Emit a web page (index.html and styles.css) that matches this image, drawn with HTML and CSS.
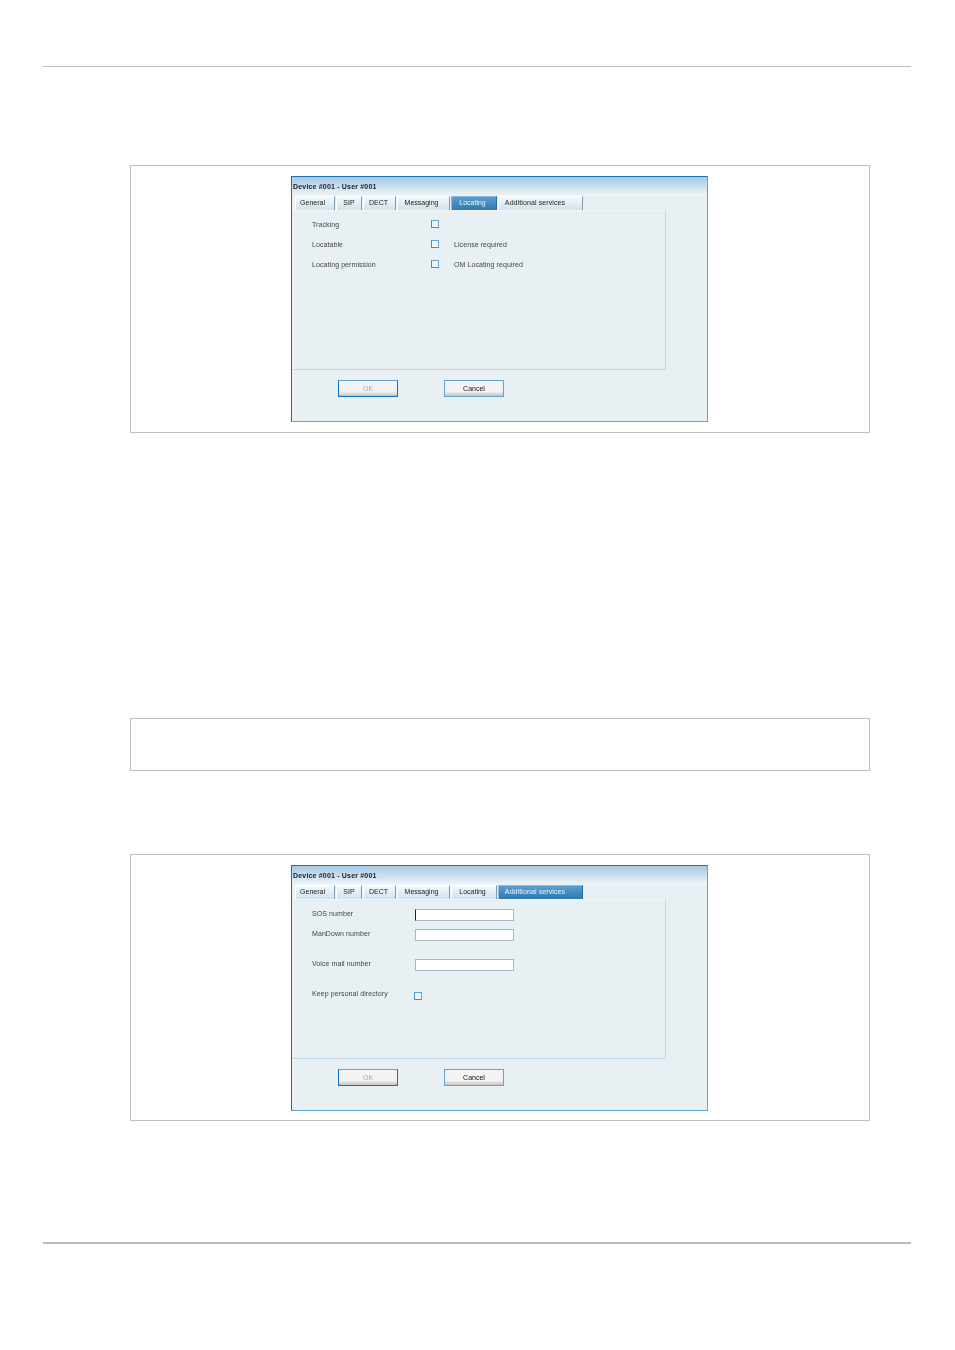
FILE: index.html
```html
<!DOCTYPE html>
<html lang="en">
<head>
    <meta charset="UTF-8">
    <title>Device #001 - User #001</title>
    <link rel="stylesheet" href="styles.css">
</head>
<body>
    <hr class="rule rule-top">

    <div class="figure figure-first">
        <div class="dialog">
            <div class="dialog-title"><span class="txt">Device #001 - User #001</span></div>
            <div class="tabs">
                <span class="tab tab-general"><span class="txt">General</span></span>
                <span class="tab tab-sip"><span class="txt">SIP</span></span>
                <span class="tab tab-dect"><span class="txt">DECT</span></span>
                <span class="tab tab-messaging"><span class="txt">Messaging</span></span>
                <span class="tab tab-locating active"><span class="txt">Locating</span></span>
                <span class="tab tab-additional"><span class="txt">Additional services</span></span>
            </div>
            <div class="panel panel-locating">
                <div class="row">
                    <span class="label txt">Tracking</span>
                    <span class="check"></span>
                </div>
                <div class="row">
                    <span class="label txt">Locatable</span>
                    <span class="check"></span>
                    <span class="note txt">License required</span>
                </div>
                <div class="row">
                    <span class="label txt">Locating permission</span>
                    <span class="check"></span>
                    <span class="note txt">OM Locating required</span>
                </div>
            </div>
            <div class="buttons">
                <button class="btn btn-off"><span class="txt">OK</span></button>
                <button class="btn"><span class="txt">Cancel</span></button>
            </div>
        </div>
    </div>

    <div class="figure figure-empty"></div>

    <div class="figure figure-last">
        <div class="dialog">
            <div class="dialog-title"><span class="txt">Device #001 - User #001</span></div>
            <div class="tabs">
                <span class="tab tab-general"><span class="txt">General</span></span>
                <span class="tab tab-sip"><span class="txt">SIP</span></span>
                <span class="tab tab-dect"><span class="txt">DECT</span></span>
                <span class="tab tab-messaging"><span class="txt">Messaging</span></span>
                <span class="tab tab-locating"><span class="txt">Locating</span></span>
                <span class="tab tab-additional active"><span class="txt">Additional services</span></span>
            </div>
            <div class="panel panel-services">
                <div class="row row-sos">
                    <span class="label txt">SOS number</span>
                    <span class="field field-focus"></span>
                </div>
                <div class="row row-mandown">
                    <span class="label txt">ManDown number</span>
                    <span class="field"></span>
                </div>
                <div class="row row-voice">
                    <span class="label txt">Voice mail number</span>
                    <span class="field"></span>
                </div>
                <div class="row row-keep">
                    <span class="label txt">Keep personal directory</span>
                    <span class="check"></span>
                </div>
            </div>
            <div class="buttons">
                <button class="btn btn-off"><span class="txt">OK</span></button>
                <button class="btn"><span class="txt">Cancel</span></button>
            </div>
        </div>
    </div>

    <hr class="rule rule-bottom">
</body>
</html>
```

FILE: styles.css
```css
body {
    background: #fff;
    margin: 0;
    padding: 0;
    font-family: "Liberation Sans", Arial, sans-serif;
}

.rule {
    border: 0;
    height: 1px;
    background: #c0c0c0;
    margin: 0 44px 0 43px;
}
.rule-top {
    margin-top: 66px;
}
.rule-bottom {
    height: 2px;
    background: #bbb;
    margin-top: 121px;
}

.figure {
    box-sizing: border-box;
    width: 740px;
    margin-left: 130px;
    border: 1px solid #bdbdbd;
    padding: 10px 0 0 160px;
}
.figure-first {
    height: 268px;
    margin-top: 98px;
}
.figure-empty {
    height: 53px;
    margin-top: 285px;
}
.figure-last {
    height: 267px;
    margin-top: 83px;
}

/* the dialogs are scaled-down screenshots, so the text is a bit soft */
.txt {
    display: inline-block;
    filter: blur(0.3px);
}

.dialog {
    box-sizing: border-box;
    width: 417px;
    height: 246px;
    background: #e8f0f4;
    border: 1px solid #5ba5d8;
    border-top-color: #1c74b4;
    border-left-color: #0a72bd;
}

.dialog-title {
    height: 19px;
    padding: 6px 0 0 1px;
    box-sizing: border-box;
    background: linear-gradient(to bottom, #a4c9e6, #f0f5f8);
    font-size: 7px;
    line-height: 8px;
    font-weight: bold;
    color: #222;
    letter-spacing: 0.18px;
}

.tabs {
    display: flex;
    height: 14px;
    padding-left: 3px;
    gap: 1px;
}
.tab {
    box-sizing: border-box;
    height: 14px;
    background: linear-gradient(to bottom, #f4f8fa, #cfe2ee);
    border-top: 1px solid #fff;
    border-left: 1px solid #fff;
    border-right: 1px solid #7f9bb0;
    font-size: 7px;
    line-height: 12px;
    color: #222;
    text-align: center;
}
.tab-general { width: 40px; padding-right: 5px; }
.tab-sip { width: 26px; }
.tab-dect { width: 33px; padding-right: 2px; }
.tab-messaging { width: 53px; padding-right: 4px; }
.tab-locating { width: 46px; padding-right: 3px; }
.tab-additional { width: 85px; padding-right: 11px; letter-spacing: 0.1px; }
.tab.active {
    background: linear-gradient(to bottom, #5a9fd0, #2f78ae);
    border-top-color: #8fbbdc;
    border-left-color: #8fbbdc;
    border-right-color: #1d6fa8;
    color: #eef4f8;
}

.panel {
    box-sizing: border-box;
    width: 374px;
    height: 160px;
    border-top: 1px solid #f2f6f8;
    border-right: 1px solid #bcd8ea;
    border-bottom: 1px solid #bcd8ea;
    display: flex;
    flex-direction: column;
}
.panel-locating {
    padding-top: 7px;
    gap: 8px;
}
.panel-services {
    padding-top: 9px;
}

.row {
    display: flex;
    align-items: center;
    height: 12px;
    padding-left: 20px;
    font-size: 7px;
    color: #444;
    letter-spacing: 0.08px;
}
.panel-locating .label {
    width: 119px;
}
.panel-services .label {
    width: 103px;
    margin-bottom: 3px;
}
.row-mandown {
    margin-top: 8px;
}
.row-voice {
    margin-top: 18px;
}
.row-keep {
    margin-top: 18px;
}
.row-keep .check {
    margin: 2px 0 0 -1px;
}

.check {
    box-sizing: border-box;
    width: 8px;
    height: 8px;
    background: #eef4f8;
    border: 1px solid #6aa6d0;
    border-left-color: #4a8cb8;
    border-bottom-color: #4a8cb8;
}
.note {
    margin-left: 15px;
}

.field {
    box-sizing: border-box;
    width: 99px;
    height: 12px;
    background: #fff;
    border: 1px solid #a9b8c2;
}
.field-focus {
    border-left: 1px solid #222;
}

.buttons {
    display: flex;
    gap: 46px;
    padding: 10px 0 0 46px;
}
.btn {
    box-sizing: border-box;
    width: 60px;
    height: 17px;
    padding: 0;
    background: linear-gradient(to bottom, #f3f3f3 0, #f3f3f3 70%, #c4c4c4 100%);
    border: 1px solid #5ba5d8;
    border-radius: 0;
    font-family: "Liberation Sans", Arial, sans-serif;
    font-size: 7px;
    line-height: 12px;
    color: #111;
}
.btn-off {
    color: #aaa;
    border-color: #5ba5d8 #0a72bd #0a72bd #0a72bd;
}
```
